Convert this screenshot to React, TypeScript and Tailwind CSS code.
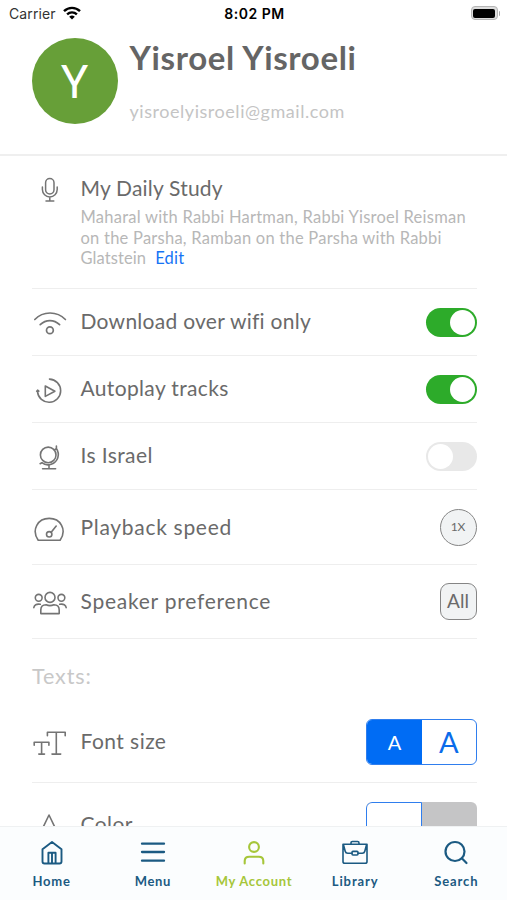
import type { ReactNode } from 'react';

function Svg({ w, h, vb, children, sw = 1.4, className = '' }: { w: number; h: number; vb?: string; children: ReactNode; sw?: number; className?: string }) {
  return (
    <svg width={w} height={h} viewBox={vb ?? `0 0 ${w} ${h}`} fill="none" stroke="currentColor" strokeWidth={sw} strokeLinecap="round" strokeLinejoin="round" className={className}>
      {children}
    </svg>
  );
}

const MicIcon = () => (
  <Svg w={36} h={28} sw={1.5}>
    <rect x="13.6" y="2.5" width="8.4" height="15.4" rx="4.2" />
    <path d="M10.4 11v2.6a7.4 7.4 0 0 0 14.8 0V11M17.8 21v4M14 25h7.8" />
  </Svg>
);
const WifiIcon = () => (
  <Svg w={36} h={28} sw={1.7}>
    <path d="M2.8 9.5C11 .8 25 .8 33.4 9.5M8.2 14.6c5.6-5.4 13.8-5.4 19.4 0" />
    <circle cx="17.9" cy="20.2" r="3.4" />
  </Svg>
);
const AutoplayIcon = () => (
  <Svg w={36} h={28} sw={1.6}>
    <path d="M17.5 2.1a11.6 11.6 0 1 1-12 12.5M4.7 14.2l.9-1 1.2 1" />
    <path d="M13.3 9v10.4l9.6-5.2z" />
  </Svg>
);
const GlobeIcon = () => (
  <Svg w={36} h={28} sw={1.6}>
    <circle cx="16.2" cy="10.9" r="7.8" />
    <path d="M24.4 2v2.5c4 6 1.5 13.5-5.2 15.8-4 1.3-7 .3-9.3-1.6l-1.8 1M24.2 4.6l-1.8 1.6M17 21v3.6M10.6 24.8h13" />
  </Svg>
);
const SpeedIcon = () => (
  <Svg w={36} h={28} sw={1.6}>
    <path d="M6.2 25.3C-1 14.5 6 3.4 17.2 3.4S35.3 14.5 28.1 25.3z" />
    <circle cx="17.2" cy="19.3" r="2.7" />
    <path d="m19.2 17.2 5-6.2" />
  </Svg>
);
const PeopleIcon = () => (
  <Svg w={36} h={28} sw={1.6}>
    <circle cx="18" cy="7.4" r="5" />
    <circle cx="6.7" cy="7.8" r="3.4" />
    <circle cx="29.4" cy="7.8" r="3.4" />
    <path d="M8.8 23.6V20c0-3.8 2.2-5.2 5.3-5.2 2.3 1 5.4 1 7.8 0 3.1 0 5.3 1.4 5.3 5.2v3.6zM1.8 17.7c.4-2.8 2.5-4 6.5-3.4M34.2 17.7c-.4-2.8-2.5-4-6.5-3.4" />
  </Svg>
);
const FontIcon = () => (
  <Svg w={36} h={28} sw={1.6}>
    <path d="M15.4 6.7V3.2h17.8v3.5M24.3 3.2v21.9M20 25.1h8.7M2.2 16.2v-3h14.7v3M9.6 13.3v11.8M6.8 25.1h5.7" />
  </Svg>
);

function Toggle({ on = false }: { on?: boolean }) {
  return (
    <div className={`flex h-[29px] w-[51px] items-center rounded-full px-0.5 ${on ? 'justify-end bg-[#2dab2a]' : 'justify-start bg-[#e8e8e8]'}`}>
      <div className="size-[25px] rounded-full bg-white" />
    </div>
  );
}

function Row({ icon, label, className, labelClass = '', children }: { icon: ReactNode; label: string; className: string; labelClass?: string; children: ReactNode }) {
  return (
    <div className={`flex shrink-0 items-center border-b border-[#eeeeee] ${className}`}>
      <div className="w-[48.5px] pt-1 text-[#747474]">{icon}</div>
      <div className={`flex-1 whitespace-nowrap text-[21px] leading-7 ${labelClass}`}>{label}</div>
      {children}
    </div>
  );
}

function Tab({ icon, label, active = false, className = '' }: { icon: ReactNode; label: string; active?: boolean; className?: string }) {
  return (
    <div className={`flex w-[101.2px] flex-col items-center pt-3 ${active ? 'text-[#a6c63a]' : 'text-[#1b5a82]'}`}>
      <div className="flex h-7 items-center">{icon}</div>
      <div className={`mt-1 whitespace-nowrap text-[13px] font-bold leading-5 ${className}`}>{label}</div>
    </div>
  );
}

export default function App() {
  return (
    <div className="flex h-[900px] w-[507px] flex-col overflow-hidden bg-white font-['Lato','Liberation_Sans',sans-serif] text-[#6a6a6a]">
      <div className="grid h-[28px] shrink-0 grid-cols-3 items-center pl-[9px] pr-[7px] font-['Inter','Liberation_Sans',sans-serif] text-black">
        <div className="flex items-center gap-[7px]">
          <span className="text-[14px] leading-4 tracking-[0.1px] text-[#333]">Carrier</span>
          <svg width="18" height="14" viewBox="0 0 18 14" fill="none" stroke="#000" strokeWidth="2.4" className="-mt-0.5">
            <path d="M1 5.2c4.6-4.5 11.4-4.5 16 0M4.1 8.4c2.8-2.7 7-2.7 9.8 0" />
            <path d="M9 13.5 6.2 10.7q2.8-2.2 5.6 0z" fill="#000" stroke="none" />
          </svg>
        </div>
        <div className="text-center text-[14px] font-semibold leading-4 tracking-[0.5px]">8:02 PM</div>
        <div className="flex items-center justify-end">
          <div className="-mt-0.5 h-[14px] w-[27px] rounded-[4px] border border-[#b5b5b5] bg-[#ddd] p-[1.5px]">
            <div className="h-full rounded-[2px] bg-black" />
          </div>
          <div className="-mt-0.5 ml-px h-[5px] w-[1.5px] rounded-r bg-[#aaa]" />
        </div>
      </div>

      <header className="flex h-[128px] shrink-0 border-b-2 border-[#efefef] pl-[31.5px] pt-[9.5px]">
        <div className="flex size-[86px] items-center justify-center rounded-full bg-[#679f38] pt-0.5 font-['Roboto','Liberation_Sans',sans-serif] text-[46px] leading-none text-white">Y</div>
        <div className="ml-3 whitespace-nowrap">
          <div className="text-[33px] font-bold leading-[39px] tracking-[0.64px] text-[#656565]">Yisroel Yisroeli</div>
          <div className="mt-[22px] text-[18px] leading-6 tracking-[0.54px] text-[#c4c4c4]">yisroelyisroeli@gmail.com</div>
        </div>
      </header>

      <main className="flex min-h-0 flex-1 flex-col overflow-hidden pl-8 pr-[30.5px]">
        <div className="flex h-[133px] shrink-0 items-start border-b border-[#eeeeee] pt-[18px]">
          <div className="w-[48.5px] pt-[2px] text-[#747474]"><MicIcon /></div>
          <div className="whitespace-nowrap">
            <div className="text-[21px] leading-7 tracking-[0.2px]">My Daily Study</div>
            <div className="mt-[5px] text-[16.5px] leading-[20.5px] tracking-[0.24px] text-[#b7b7b7]">
              <div>Maharal with Rabbi Hartman, Rabbi Yisroel Reisman</div>
              <div>on the Parsha, Ramban on the Parsha with Rabbi</div>
              <div className="flex gap-[9px]"><span className="tracking-[0.1px]">Glatstein</span><span className="text-[#1674f5]">Edit</span></div>
            </div>
          </div>
        </div>
        <Row icon={<WifiIcon />} label="Download over wifi only" className="h-[67px]" labelClass="pb-[3px] tracking-[0.27px]"><Toggle on /></Row>
        <Row icon={<AutoplayIcon />} label="Autoplay tracks" className="h-[67px]" labelClass="pb-[3px] tracking-[0.35px]"><Toggle on /></Row>
        <Row icon={<GlobeIcon />} label="Is Israel" className="h-[67px]" labelClass="pb-[3px] tracking-[0.4px]"><Toggle /></Row>
        <Row icon={<SpeedIcon />} label="Playback speed" className="h-[75px]" labelClass="tracking-[0.7px]">
          <div className="flex size-[37px] items-center justify-center rounded-full border-[1.5px] border-[#858585] bg-[#f1f3f4] text-xs">1X</div>
        </Row>
        <Row icon={<PeopleIcon />} label="Speaker preference" className="h-[74px]" labelClass="pb-0.5 tracking-[0.75px]">
          <div className="flex size-[37px] items-center justify-center rounded-[9px] border-[1.5px] border-[#858585] bg-[#f1f3f4] text-[19px]">All</div>
        </Row>
        <div className="h-[61px] shrink-0 pt-[23px] text-[21.5px] leading-7 tracking-[0.9px] text-[#c8c8c8]">Texts:</div>
        <Row icon={<FontIcon />} label="Font size" className="h-[83px]" labelClass="pb-px tracking-[0.45px]">
          <div className="mt-px flex h-[46px] w-[110.5px] overflow-hidden rounded-md border border-[#2f7eee]">
            <div className="flex w-[55px] items-center justify-center bg-[#006cf4] text-xl text-white">A</div>
            <div className="flex flex-1 items-center justify-center text-[29px] text-[#0b6cea]">A</div>
          </div>
        </Row>
        <Row icon={<Svg w={36} h={28} sw={1.6}><path d="m11 15.5 6-12.5L23 15.5l2 5a8.5 8.5 0 0 1-16 0z" /></Svg>} label="Color" className="h-[83px]" labelClass="pb-px tracking-[0.4px]">
          <div className="mt-px flex h-[46px] w-[110.5px] overflow-hidden rounded-md bg-[#c5c5c6]">
            <div className="w-14 rounded-l-md border-[1.5px] border-[#2f7eee] bg-white" />
          </div>
        </Row>
      </main>

      <nav className="flex h-[74px] shrink-0 border-t border-[#eff1f2] bg-[#fbfdfe] pl-px">
        <Tab label="Home" className="tracking-[0.8px]" icon={
          <Svg w={24} h={26} sw={1.9}><path d="M2.5 9.2 12 2l9.5 7.2v12.3q0 2-2 2h-15q-2 0-2-2zM8.4 23.3V12.8h7.2v10.5M12 13v10" /></Svg>} />
        <Tab label="Menu" className="tracking-[0.6px]" icon={
          <Svg w={26} h={24} sw={2.3}><path d="M2 2.7h22M2 11h22M2 19.7h22" /></Svg>} />
        <Tab active label="My Account" className="tracking-[0.7px]" icon={
          <Svg w={24} h={26} sw={2.1}><circle cx="12" cy="7" r="4.9" /><path d="M2.7 23.4v-2.3q0-4.4 4.6-4.4h9.4q4.6 0 4.6 4.4v2.3" /></Svg>} />
        <Tab label="Library" className="tracking-[0.9px]" icon={
          <Svg w={28} h={26} sw={1.6}><path d="M2 4.2h24v17.3q0 1.8-1.8 1.8H3.8Q2 23.3 2 21.5zM10 4V2.9q0-1.4 1.4-1.4h5.2q1.4 0 1.4 1.4V4M2.6 5.2l1.6 6q.5 2 2.5 2H11M25.4 5.2l-1.6 6q-.5 2-2.5 2H17" /><rect x="11" y="11.4" width="6" height="3.6" rx="1" /></Svg>} />
        <Tab label="Search" className="tracking-[0.9px]" icon={
          <Svg w={26} h={26} sw={2.2}><circle cx="12" cy="11.5" r="9.5" /><path d="m18.8 18.3 4.7 4.7" /></Svg>} />
      </nav>
    </div>
  );
}
